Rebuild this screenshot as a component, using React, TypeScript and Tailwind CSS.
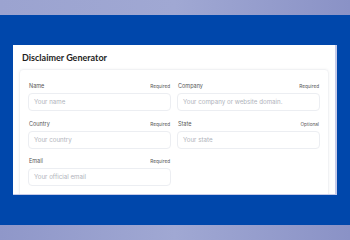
const fields = [
  { label: 'Name', tag: 'Required', placeholder: 'Your name' },
  { label: 'Company', tag: 'Required', placeholder: 'Your company or website domain.' },
  { label: 'Country', tag: 'Required', placeholder: 'Your country' },
  { label: 'State', tag: 'Optional', placeholder: 'Your state' },
  { label: 'Email', tag: 'Required', placeholder: 'Your official email' },
];

function Field({ label, tag, placeholder }: { label: string; tag: string; placeholder: string }) {
  return (
    <div className="flex flex-col">
      <div className="flex items-center justify-between px-[1px] text-[5.5px] leading-[8px] text-[#555]">
        <span>{label}</span>
        <span className="text-[4.7px]">{tag}</span>
      </div>
      <div className="mt-[3px] flex h-[18px] items-center rounded-[4px] border border-[#eceef2] px-[5px] text-[6.2px] text-[#b0b3bb]">
        {placeholder}
      </div>
    </div>
  );
}

export default function App() {
  return (
    <div className="flex h-[240px] w-[350px] flex-col overflow-hidden font-['Inter',sans-serif]">
      <div className="h-[15px] bg-gradient-to-r from-[#9ba3d0] via-[#a0a8d3] to-[#8a92c6]" />
      <div className="flex-1 bg-[#0047ab] px-[13px] pt-[30px]">
        <div className="h-[150px] w-[324px] overflow-hidden border-r-2 border-b border-[#c6cbe9] bg-white">
          <h1 className="px-[9px] pt-[6px] font-['Lato',sans-serif] text-[9px] font-bold leading-[14px] text-[#1e1e1e]">
            Disclaimer Generator
          </h1>
          <div className="mx-[6px] mt-[4px] h-[200px] rounded-[4px] border border-[#f1f2f4] px-[8px] pt-[12px] shadow-[0_0_3px_rgba(0,0,0,0.05)]">
            <div className="grid grid-cols-2 gap-x-[6px] gap-y-[8.5px]">
              {fields.map((f) => (
                <Field key={f.label} {...f} />
              ))}
            </div>
          </div>
        </div>
      </div>
      <div className="h-[15px] bg-gradient-to-r from-[#8f97c9] via-[#a0a8d3] to-[#8a92c6]" />
    </div>
  );
}
